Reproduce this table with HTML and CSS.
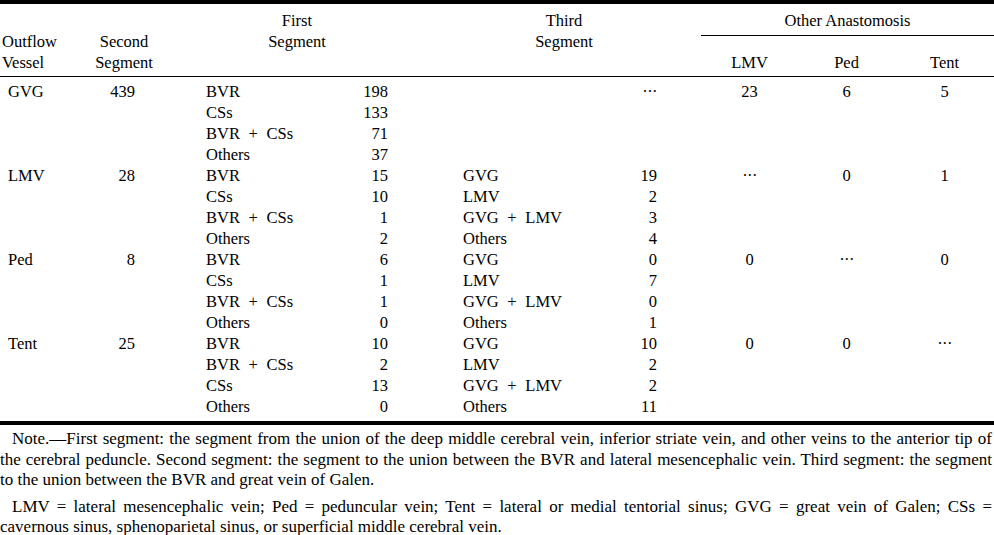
FILE: index.html
```html
<!DOCTYPE html>
<html lang="en">
<head>
<meta charset="utf-8">
<title>Outflow vessels</title>
<link rel="stylesheet" href="styles.css">
</head>
<body>
<div class="table">
  <div class="thead">
    <div class="h h-vessel">Outflow<br>Vessel</div>
    <div class="h h-second">Second<br>Segment</div>
    <div class="h h-first">First<br>Segment</div>
    <div class="h h-third">Third<br>Segment</div>
    <div class="h h-other">Other Anastomosis</div>
    <div class="h h-lmv">LMV</div>
    <div class="h h-ped">Ped</div>
    <div class="h h-tent">Tent</div>
  </div>
  <div class="tbody">
    <div class="row"><div class="c-v">GVG</div><div class="c-s">439</div><div class="c-fl">BVR</div><div class="c-fn">198</div><div class="c-tn dots">···</div><div class="c-a1">23</div><div class="c-a2">6</div><div class="c-a3">5</div></div>
    <div class="row"><div class="c-fl">CSs</div><div class="c-fn">133</div></div>
    <div class="row"><div class="c-fl">BVR + CSs</div><div class="c-fn">71</div></div>
    <div class="row"><div class="c-fl">Others</div><div class="c-fn">37</div></div>

    <div class="row"><div class="c-v">LMV</div><div class="c-s">28</div><div class="c-fl">BVR</div><div class="c-fn">15</div><div class="c-tl">GVG</div><div class="c-tn">19</div><div class="c-a1 dots">···</div><div class="c-a2">0</div><div class="c-a3">1</div></div>
    <div class="row"><div class="c-fl">CSs</div><div class="c-fn">10</div><div class="c-tl">LMV</div><div class="c-tn">2</div></div>
    <div class="row"><div class="c-fl">BVR + CSs</div><div class="c-fn">1</div><div class="c-tl">GVG + LMV</div><div class="c-tn">3</div></div>
    <div class="row"><div class="c-fl">Others</div><div class="c-fn">2</div><div class="c-tl">Others</div><div class="c-tn">4</div></div>

    <div class="row"><div class="c-v">Ped</div><div class="c-s">8</div><div class="c-fl">BVR</div><div class="c-fn">6</div><div class="c-tl">GVG</div><div class="c-tn">0</div><div class="c-a1">0</div><div class="c-a2 dots">···</div><div class="c-a3">0</div></div>
    <div class="row"><div class="c-fl">CSs</div><div class="c-fn">1</div><div class="c-tl">LMV</div><div class="c-tn">7</div></div>
    <div class="row"><div class="c-fl">BVR + CSs</div><div class="c-fn">1</div><div class="c-tl">GVG + LMV</div><div class="c-tn">0</div></div>
    <div class="row"><div class="c-fl">Others</div><div class="c-fn">0</div><div class="c-tl">Others</div><div class="c-tn">1</div></div>

    <div class="row"><div class="c-v">Tent</div><div class="c-s">25</div><div class="c-fl">BVR</div><div class="c-fn">10</div><div class="c-tl">GVG</div><div class="c-tn">10</div><div class="c-a1">0</div><div class="c-a2">0</div><div class="c-a3 dots">···</div></div>
    <div class="row"><div class="c-fl">BVR + CSs</div><div class="c-fn">2</div><div class="c-tl">LMV</div><div class="c-tn">2</div></div>
    <div class="row"><div class="c-fl">CSs</div><div class="c-fn">13</div><div class="c-tl">GVG + LMV</div><div class="c-tn">2</div></div>
    <div class="row"><div class="c-fl">Others</div><div class="c-fn">0</div><div class="c-tl">Others</div><div class="c-tn">11</div></div>
  </div>
  <div class="notes">
    <p>Note.—First segment: the segment from the union of the deep middle cerebral vein, inferior striate vein, and other veins to the anterior tip of the cerebral peduncle. Second segment: the segment to the union between the BVR and lateral mesencephalic vein. Third segment: the segment to the union between the BVR and great vein of Galen.</p>
    <p>LMV = lateral mesencephalic vein; Ped = peduncular vein; Tent = lateral or medial tentorial sinus; GVG = great vein of Galen; CSs = cavernous sinus, sphenoparietal sinus, or superficial middle cerebral vein.</p>
  </div>
</div>
</body>
</html>
```

FILE: styles.css
```css
html, body {
  margin: 0;
  padding: 0;
  background: #fff;
}

body {
  font-family: "Liberation Serif", "Times New Roman", serif;
  color: #000;
  font-size: 16.5px;
  line-height: 21px;
}

.table {
  width: 994px;
}

.thead,
.row {
  display: grid;
  grid-template-columns: 80px 88px 162px 58px 212px 57px 44px 97px 97px 99px;
}

.thead {
  border-top: 4px solid #000;
  border-bottom: 1px solid #000;
  grid-template-rows: 21px 21px 21px;
  padding: 5.5px 0 3.5px;
}

.h {
  white-space: nowrap;
}

.h-vessel {
  grid-column: 1;
  grid-row: 2 / 4;
  padding-left: 2px;
}

.h-second {
  grid-column: 2;
  grid-row: 2 / 4;
  text-align: center;
}

.h-first {
  grid-column: 3 / 5;
  grid-row: 1 / 3;
  text-align: center;
  padding-left: 38px;
}

.h-third {
  grid-column: 5 / 7;
  grid-row: 1 / 3;
  text-align: center;
  padding-left: 83px;
}

.h-other {
  grid-column: 8 / 11;
  grid-row: 1 / 3;
  align-self: start;
  text-align: center;
  padding-bottom: 4px;
  border-bottom: 1px solid #000;
}

.h-lmv { grid-column: 8; grid-row: 3; text-align: center; }
.h-ped { grid-column: 9; grid-row: 3; text-align: center; }
.h-tent { grid-column: 10; grid-row: 3; text-align: center; }

.tbody {
  padding: 3.5px 0 4.5px;
  border-bottom: 4px solid #000;
}

.row {
  grid-template-rows: 21px;
  white-space: nowrap;
}

.c-v { grid-column: 1; padding-left: 8px; }
.c-s { grid-column: 2; text-align: right; padding-right: 33px; }
.c-fl { grid-column: 3; padding-left: 38px; word-spacing: 4.5px; }
.c-fn { grid-column: 4; text-align: right; }
.c-tl { grid-column: 5; padding-left: 75px; word-spacing: 4.5px; }
.c-tn { grid-column: 6; text-align: right; }
.c-a1 { grid-column: 8; text-align: center; }
.c-a2 { grid-column: 9; text-align: center; }
.c-a3 { grid-column: 10; text-align: center; }

.dots {
  letter-spacing: -0.6px;
}

.notes {
  padding: 4px 2px 0 0;
  font-size: 17px;
  line-height: 20.5px;
}

.notes p {
  margin: 0 0 6px;
  text-indent: 12px;
  text-align: justify;
}
```
